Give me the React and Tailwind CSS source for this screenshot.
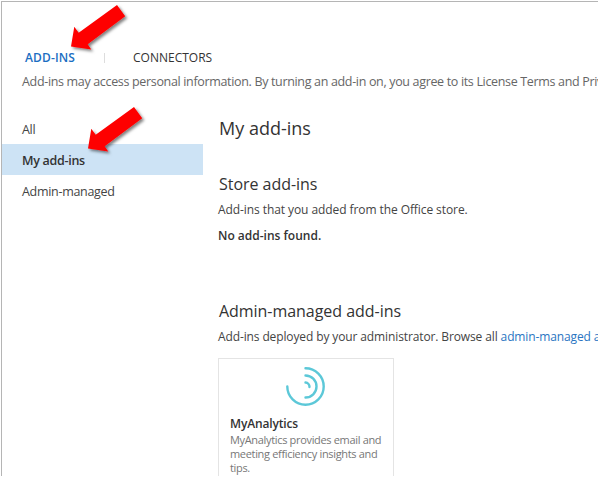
function Arrow({ className }) {
  return (
    <svg className={className} width="64" height="56" viewBox="0 0 64 56" fill="none">
      <defs>
        <filter id="arrowShadow" x="-20%" y="-20%" width="150%" height="150%">
          <feDropShadow dx="2" dy="2" stdDeviation="1.5" floodColor="#000" floodOpacity="0.5" />
        </filter>
      </defs>
      <path d="M49 1 L57.2 12.3 L19.7 40.3 L23.2 45.5 L3 42.5 L6.3 22.7 L10.7 28.7 Z" fill="#fe0000" filter="url(#arrowShadow)" />
    </svg>
  );
}

function AnalyticsIcon() {
  return (
    <svg className="block" width="42" height="42" viewBox="0 0 42 42" fill="none" stroke="#5cc8d8" strokeWidth="2.4" strokeLinecap="round">
      <path d="M21.5 3.3 A18.2 18.2 0 1 1 3.3 21.5" />
      <path d="M21.5 10.5 A11 11 0 0 1 21.5 32.5" />
      <path d="M21.5 17.5 A4.3 4.3 0 0 1 25.5 22" />
    </svg>
  );
}

export default function App() {
  return (
    <div className="relative h-[477px] w-[602px] overflow-hidden bg-white font-['Open_Sans','Noto_Sans',sans-serif] text-[#444]">
      <div className="ml-px mt-px h-[475px] w-[597px] overflow-hidden whitespace-nowrap border-l border-t border-[#b5b5b5]">
        <header className="pl-5 pt-[46px]">
          <nav className="flex h-5 items-center text-[12px] leading-5">
            <a className="ml-[3px] w-[79px] font-semibold tracking-[0.15px] text-[#1b6ec2]"><span>ADD-INS</span></a>
            <i className="h-2.5 w-px bg-[#ddd]" />
            <a className="ml-7 text-[#333]"><span>CONNECTORS</span></a>
          </nav>
          <p className="mt-1 text-[12.5px] leading-5 tracking-[-0.335px] text-[#666]"><span>Add-ins may access personal information. By turning an add-in on, you agree to its License Terms and Priv</span></p>
        </header>
        <div className="flex pt-[21px]">
          <aside className="w-[201px] shrink-0 text-[12.5px] leading-[31px] tracking-[-0.3px]">
            <div className="h-[31px] pl-5 pt-px"><span>All</span></div>
            <div className="h-[31px] bg-[#cde3f5] pl-5 pt-px font-semibold text-[#333]"><span>My add-ins</span></div>
            <div className="h-[31px] pl-5 pt-px"><span>Admin-managed</span></div>
          </aside>
          <main className="shrink-0 pl-[15px] text-[12px] tracking-[-0.08px]">
            <h1 className="mt-[3px] pl-px text-[18px] leading-6 tracking-normal text-[#333]"><span>My add-ins</span></h1>
            <h2 className="mt-8 pl-px text-[16px] leading-6 tracking-[-0.04px] text-[#333]"><span>Store add-ins</span></h2>
            <p className="mt-1 leading-5"><span>Add-ins that you added from the Office store.</span></p>
            <p className="mt-1.5 font-semibold leading-5 tracking-normal text-[#333]"><span>No add-ins found.</span></p>
            <h2 className="mt-[53px] pl-px text-[16px] leading-6 tracking-[-0.04px] text-[#333]"><span>Admin-managed add-ins</span></h2>
            <p className="mt-1 leading-5 tracking-[-0.12px]"><span>Add-ins deployed by your administrator. Browse all <a className="text-[#2a75c2]">admin-managed a</a></span></p>
            <article className="mt-[11px] h-[160px] w-[176px] border border-[#e4e4e4] pl-[11px]">
              <div className="ml-[54px] mt-[6px]"><AnalyticsIcon /></div>
              <h3 className="mt-[7px] text-[12px] font-semibold leading-5 tracking-[-0.15px] text-[#333]"><span>MyAnalytics</span></h3>
              <p className="-mt-px text-[11px] leading-[14px] tracking-[-0.33px] text-[#777]"><span>MyAnalytics provides email and</span><br /><span>meeting efficiency insights and</span><br /><span>tips.</span></p>
            </article>
          </main>
        </div>
      </div>
      <Arrow className="absolute left-[68px] top-[4px]" />
      <Arrow className="absolute left-[85px] top-[106px]" />
    </div>
  );
}
